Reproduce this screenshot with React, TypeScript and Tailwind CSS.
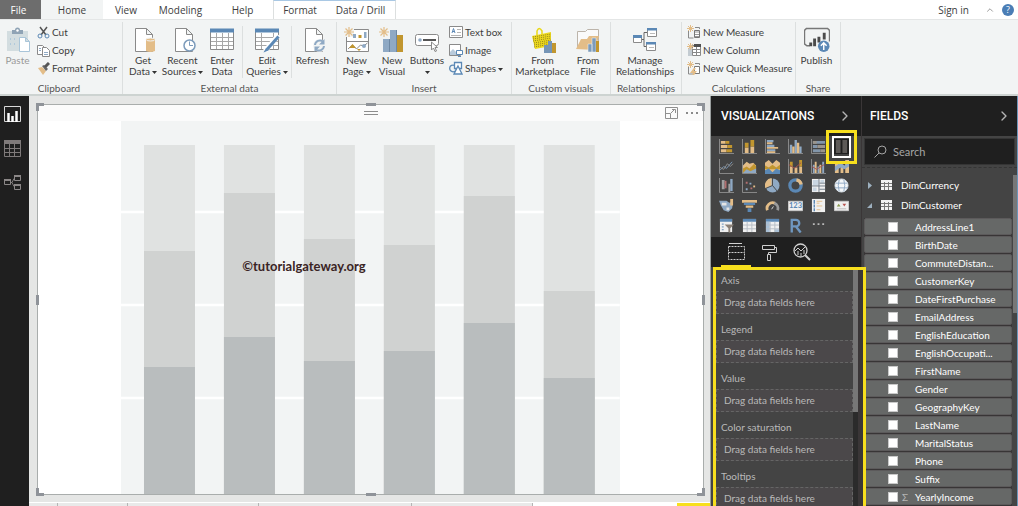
import { FC, ReactNode, useState } from "react";
import clsx from "clsx";
import { FiChevronRight, FiChevronUp } from "react-icons/fi";

const BLUE = "#5b88b5";
const STEEL = "#8fa9c4";
const GOLD = "#c1962f";
const TAN = "#e3bd88";
const GRAY = "#8a8a8a";

interface IconProps {
  size?: number;
  box?: number;
  children: ReactNode;
}

// Small icons are drawn on a 13 or 14 unit grid, ribbon icons on 26
const Icon: FC<IconProps> = ({ size = 16, box = size, children }) => (
  <svg
    width={size}
    height={size}
    viewBox={`0 0 ${box} ${box}`}
    fill="none"
    className="shrink-0"
    aria-hidden="true"
  >
    {children}
  </svg>
);

const Page: FC = () => (
  <path d="M5.5 1.5h11l6 6v17h-17zM16.5 1.5v6h6" fill="#fff" stroke={GRAY} />
);

const Spark: FC = () => (
  <path
    d="M5 0v10M0 5h10M1.5 1.5l7 7M8.5 1.5l-7 7"
    stroke={TAN}
    strokeWidth="1.2"
  />
);

// Ribbon icons
const PasteIcon = () => (
  <Icon size={26}>
    <path d="M2 4h21v20H2z" fill="#d3dde0" />
    <path d="M7 7V3h3a2.5 2.5 0 0 1 5 0h3v4z" fill="#8fa3b5" />
    <circle cx="12.5" cy="3.5" r="1.2" fill="#fff" />
    <path d="M14.5 10.5h6l4 4v10h-10zM20.5 10.5v4h4" fill="#fff" stroke="#a9c5d9" />
    <path d="M5 12h1M9 12h1M5 17h1M9 17h1" stroke="#8fb6d6" />
  </Icon>
);

const GetDataIcon = () => (
  <Icon size={26}>
    <Page />
    <path d="M16 13h9v11q-4.5 2-9 0z" fill={TAN} />
    <ellipse cx="20.5" cy="12.5" rx="4.5" ry="1.5" fill={TAN} stroke="#f2f4f4" />
  </Icon>
);

const RecentIcon = () => (
  <Icon size={26}>
    <Page />
    <circle cx="19.5" cy="18.5" r="5.5" fill="#fff" stroke="#7c9bbb" strokeWidth="1.5" />
    <path d="M19.5 14.5v4h3.5" stroke="#7c9bbb" />
  </Icon>
);

const TableIcon = () => (
  <Icon size={26}>
    <path d="M1.5 2.5h23v20h-23z" fill="#fff" stroke={GRAY} />
    <path d="M1 1.5h24v4H1z" fill={BLUE} />
    <path d="M2 10.5h22M2 14.5h22M2 18.5h22M7.5 6v16M13.5 6v16M19.5 6v16" stroke="#a8a8a8" />
  </Icon>
);

const EditQueriesIcon = () => (
  <Icon size={26}>
    <path d="M1.5 2.5h23v20h-23z" fill="#fff" stroke={GRAY} />
    <path d="M1 1.5h24v4H1z" fill={BLUE} />
    <path d="M2 10.5h22M2 14.5h22M2 18.5h22M7.5 6v16M19.5 6v16" stroke="#a8a8a8" />
    <path d="M24.5 8 11 24" stroke="#fff" strokeWidth="5" />
    <path d="M24.5 9.5 13 22.5" stroke={BLUE} strokeWidth="3" />
    <path d="m12 21 2.5 2.5-5 2z" fill={BLUE} />
  </Icon>
);

const RefreshIcon = () => (
  <Icon size={26}>
    <Page />
    <circle cx="19.5" cy="18.5" r="6.5" fill="#f2f4f4" />
    <path d="M15 18a5 5 0 0 1 8-3.5M24 19a5 5 0 0 1-8 3.5" stroke={STEEL} strokeWidth="2" />
    <path d="M24.5 12v5.5H19zM14.5 25v-5.5H20z" fill={STEEL} />
  </Icon>
);

const NewPageIcon = () => (
  <Icon size={26}>
    <path d="M2.5 2.5h22v22h-22zM2 14.5h22" fill="#fff" stroke={GRAY} />
    <path d="M2 2h8v8H2z" fill="#f2f4f4" />
    <path d="M9 7h3v4H9zM20 5h2.5v6H20z" fill={STEEL} />
    <path d="M14.5 8h3v3h-3z" fill={GOLD} />
    <path d="m4 22 4.5-4 4 4 4-4 3 1 4-3" stroke={GRAY} />
    <path d="m5 21 3.5-4 3.5 4zM13 22h4l-2 2z" fill={GOLD} />
    <circle cx="20" cy="19" r="2" fill={STEEL} />
    <Spark />
  </Icon>
);

const NewVisualIcon = () => (
  <Icon size={26}>
    <path d="M4 12h6v13H4zM11 3h6v22h-6z" fill={STEEL} />
    <path d="M18 8h6v17h-6z" fill={GOLD} />
    <path d="M10.5 12v13M17.5 3v22" stroke="#6e88a3" />
    <Spark />
  </Icon>
);

const ButtonsIcon = () => (
  <Icon size={26}>
    <rect x="1.5" y="7.5" width="23" height="11" rx="2" fill="#fff" stroke={GRAY} />
    <circle cx="6" cy="13" r="1.8" fill={STEEL} />
    <path d="M9 13h13" stroke="#555" strokeWidth="2" />
    <path d="M17.5 15v8l2-2 1.5 3.5 1.5-.5-1.5-3.5H23.500z" fill="#fff" stroke={GRAY} />
  </Icon>
);

const MarketplaceIcon = () => (
  <Icon size={26}>
    <path d="M7 9V4Q9-1 12 4v3" stroke="#e9d816" strokeWidth="1.5" />
    <path d="m2 9 19-4v14L5 22z" fill="#ecd91d" />
    <path
      d="m3 10 18-3M3 12l18-3M3 14l18-3M4 16l17-3M4 18l17-3M4 20l17-3"
      stroke="#94821f"
      strokeDasharray="1 1"
    />
    <path d="M14 18h4v8h-4zM18 14h4v12h-4z" fill="#7595b6" />
    <path d="M22 16h4v10h-4z" fill={GOLD} />
  </Icon>
);

const FileIcon = () => (
  <Icon size={26}>
    <path d="M2.5 22V4.5h8l2-2h11V14" fill="#fafafa" stroke="#bcb4aa" />
    <path d="m1 22 5-10h6l2-3h10l-4 14z" fill={TAN} />
    <path d="M13 17h4v8h-4zM17 11h4v14h-4z" fill="#7c9bbb" stroke="#f2f4f4" strokeWidth=".5" />
    <path d="M21 14h3v11h-3z" fill={GOLD} />
  </Icon>
);

const ManageIcon = () => (
  <Icon size={26}>
    <path d="M9 12.5h3v-7h4M12 12.5v7h3" stroke="#666" />
    <path d="M1.5 8.5h8v7h-8zM15.5 1.5h9v8h-9zM14.5 15.5h9v8h-9z" fill="#fff" stroke={GRAY} />
    <path d="M1 8h9v3H1zM15 1h10v2.5H15zM14 15h10v2.5H14z" fill={BLUE} />
    <path d="M18 6.5h5M17 20.5h5" stroke="#bbb" />
  </Icon>
);

const PublishIcon = () => (
  <Icon size={26} box={27}>
    <path d="M6 19.5H3l-2.5-2v-14l2-2h22l2 2V15" stroke="#777" strokeWidth="1.5" />
    <path d="M7 16v4M11 12v8M15.5 10v6M21 6v7" stroke="#4c4c4c" strokeWidth="3" />
    <circle cx="20.5" cy="20" r="6" fill={BLUE} />
    <path d="M20.5 24v-7M17.5 19.5l3-3 3 3" stroke="#fff" strokeWidth="1.5" />
  </Icon>
);

const CutIcon = () => (
  <Icon size={13}>
    <path d="m3 1 6 8M10 1 4 9" stroke="#555" strokeWidth="1.5" />
    <circle cx="3" cy="10" r="2" stroke={BLUE} />
    <circle cx="10" cy="10" r="2" stroke={BLUE} />
  </Icon>
);

const CopyIcon = () => (
  <Icon size={13}>
    <path d="M.5 1.5h5l2 2v7h-7z" fill="#fff" stroke={GRAY} />
    <path d="M5.5 3.5h4l3 3v6h-7z" fill="#fff" stroke={GRAY} />
    <path d="M2 4.5h2M2 6.5h2M7 8.5h4M7 10.5h4" stroke={STEEL} />
  </Icon>
);

const PainterIcon = () => (
  <Icon size={13}>
    <path d="m1 6 4-1 4 4-3 4z" fill={TAN} />
    <path d="m5 4 2-1 4 4-2 2z" fill="#666" />
    <path d="m8 5 4-4" stroke="#555" strokeWidth="3" />
  </Icon>
);

const TextBoxIcon = () => (
  <Icon size={14}>
    <path d="M.5 1.5h13v11H.5z" fill="#fff" stroke={GRAY} />
    <path d="m3 8 1.5-4.5L6 8M3.5 6.5h2" stroke={BLUE} />
    <path d="M8 4.5h4M8 7.5h4M2 10.5h10" stroke="#b5b5b5" />
  </Icon>
);

const ImageIcon = () => (
  <Icon size={14}>
    <path d="M.5 1.5h11v11H.5z" fill="#fff" stroke={GRAY} />
    <path d="M1 12V9l3-3 4 4v2z" fill="#b8cadb" />
    <path d="M7.5 7.5h6v4h-6zM9 13.5h3" fill="#fff" stroke={BLUE} />
  </Icon>
);

const ShapesIcon = () => (
  <Icon size={14}>
    <circle cx="4" cy="7.5" r="3.3" stroke={BLUE} strokeWidth="1.3" />
    <path d="M5.5 1.5h7v6h-7z" fill="#fff" stroke={BLUE} strokeWidth="1.3" />
    <path d="m9 5 4 8H5z" fill="#fff" stroke={BLUE} strokeWidth="1.3" />
  </Icon>
);

const SmallSpark = () => (
  <path d="M3.5 0v7M0 3.5h7M1 1l5 5M6 1 1 6" stroke={TAN} />
);

const MeasureIcon = () => (
  <Icon size={14}>
    <path d="M1.5 5v8h5M8 2.5h4.5V4" stroke={GRAY} />
    <path d="M7.5 5.5h5v7h-5z" fill="#fff" stroke="#777" />
    <path d="M8 7h4M8 9.5h4M8 11.5h4" stroke="#999" />
    <SmallSpark />
  </Icon>
);

const ColumnIcon = () => (
  <Icon size={14}>
    <path d="M1 5h4v8H1z" fill="#c3cbd1" />
    <path d="M5.5 2.5h8v10h-8zM9.5 3v10M6 6.5h7M6 9.5h7" fill="#fff" stroke="#888" />
    <path d="M7 1h7v3H7z" fill="#4f4f4f" />
    <SmallSpark />
  </Icon>
);

const QuickMeasureIcon = () => (
  <Icon size={14}>
    <path d="M1.5 5v8h5M8 2.5h4.5V4" stroke={GRAY} />
    <path d="M7.5 5.5h5v7h-5z" fill="#fff" stroke="#777" />
    <path d="M8 7 5 11h3l-2 3" stroke={TAN} strokeWidth="2" />
    <SmallSpark />
  </Icon>
);

// Ribbon building blocks
interface BigButtonProps {
  icon: ReactNode;
  lines: string[];
  menu?: boolean;
  className?: string;
}

const Caret: FC = () => (
  <svg width="5" height="3" viewBox="0 0 5 3" className="ml-0.5 inline-block align-middle" aria-hidden="true">
    <path d="M0 0h5L2.5 3z" fill="#333" />
  </svg>
);

const BigButton: FC<BigButtonProps> = ({ icon, lines, menu, className }) => (
  <button
    type="button"
    className={clsx("flex shrink-0 flex-col items-center whitespace-nowrap pt-[5px]", className)}
  >
    {icon}
    <span className="mt-0.5 text-center leading-[11px]">
      {lines.map((line, i) => (
        <span key={line || "menu"} className="block h-[11px]">
          {line}
          {menu && i === lines.length - 1 && <Caret />}
        </span>
      ))}
    </span>
  </button>
);

interface SmallButtonProps {
  icon: ReactNode;
  label: string;
  menu?: boolean;
}

const SmallButton: FC<SmallButtonProps> = ({ icon, label, menu }) => (
  <button type="button" className="flex h-[18px] items-center gap-0.5 whitespace-nowrap">
    {icon}
    <span>
      {label}
      {menu && <Caret />}
    </span>
  </button>
);

interface GroupProps {
  title: string;
  className: string;
  children: ReactNode;
}

const Group: FC<GroupProps> = ({ title, className, children }) => (
  <section
    aria-label={title}
    className={clsx("mt-0.5 flex shrink-0 flex-col border-r border-[#dcdfdf]", className)}
  >
    <div className="flex flex-1">{children}</div>
    <div className="h-3 whitespace-nowrap text-center text-[#555]">{title}</div>
  </section>
);

const ribbonTabs = [
  { name: "File", className: "w-[41px] bg-[#6d6d6d] pr-1 text-white" },
  { name: "Home", className: "w-[62px] bg-[#f2f4f4]" },
  { name: "View", className: "w-[46px]" },
  { name: "Modeling", className: "w-[63px]" },
  { name: "Help", className: "w-[61px]" },
  { name: "Format", className: "w-[53px] border-l border-t border-l-[#dcdfdf] border-t-[#a9c8e4]" },
  { name: "Data / Drill", className: "w-[70px] border-r border-t border-r-[#dcdfdf] border-t-[#a9c8e4]" },
];

const Ribbon: FC = () => (
  <header className="shrink-0">
    <div className="flex h-[19px] items-stretch bg-white font-['Open_Sans','Noto_Sans',sans-serif]">
      <nav className="flex" aria-label="Ribbon">
        {ribbonTabs.map((tab) => (
          <button
            key={tab.name}
            type="button"
            className={clsx("shrink-0 whitespace-nowrap text-center", tab.className)}
          >
            {tab.name}
          </button>
        ))}
      </nav>
      <div className="ml-auto flex items-center pr-1">
        <button type="button">Sign in</button>
        <button type="button" aria-label="Collapse ribbon" className="ml-4 text-[#888]">
          <FiChevronUp size={10} />
        </button>
        <button
          type="button"
          aria-label="Help center"
          className="ml-[7px] size-3 rounded-full bg-[#4a7db5] text-[9px] leading-3 text-white"
        >
          ?
        </button>
      </div>
    </div>
    <div className="flex h-[77px] border-b-2 border-t border-b-[#cdd3d1] border-t-[#e4e6e6] bg-[#f2f4f4]">
      <Group title="Clipboard" className="w-[123px] pr-1">
        <BigButton icon={<PasteIcon />} lines={["Paste"]} className="w-[35px] text-[#999]" />
        <div className="ml-0.5 flex flex-col pt-px">
          <SmallButton icon={<CutIcon />} label="Cut" />
          <SmallButton icon={<CopyIcon />} label="Copy" />
          <SmallButton icon={<PainterIcon />} label="Format Painter" />
        </div>
      </Group>
      <Group title="External data" className="w-[214px]">
        <BigButton icon={<GetDataIcon />} lines={["Get", "Data"]} menu className="w-[40px]" />
        <BigButton icon={<RecentIcon />} lines={["Recent", "Sources"]} menu className="w-[39px]" />
        <BigButton icon={<TableIcon />} lines={["Enter", "Data"]} className="w-[40px]" />
        <div className="my-1 w-px bg-[#dcdfdf]" />
        <BigButton icon={<EditQueriesIcon />} lines={["Edit", "Queries"]} menu className="w-[48px]" />
        <div className="my-1 w-px bg-[#dcdfdf]" />
        <BigButton icon={<RefreshIcon />} lines={["Refresh"]} className="w-[41px]" />
      </Group>
      <Group title="Insert" className="w-[175px]">
        <BigButton icon={<NewPageIcon />} lines={["New", "Page"]} menu className="w-[39px]" />
        <BigButton icon={<NewVisualIcon />} lines={["New", "Visual"]} className="w-[32px]" />
        <BigButton icon={<ButtonsIcon />} lines={["Buttons", ""]} menu className="w-[38px]" />
        <div className="ml-[3px] flex flex-col pt-px">
          <SmallButton icon={<TextBoxIcon />} label="Text box" />
          <SmallButton icon={<ImageIcon />} label="Image" />
          <SmallButton icon={<ShapesIcon />} label="Shapes" menu />
        </div>
      </Group>
      <Group title="Custom visuals" className="w-[99px]">
        <BigButton icon={<MarketplaceIcon />} lines={["From", "Marketplace"]} className="w-[61px]" />
        <BigButton icon={<FileIcon />} lines={["From", "File"]} className="w-[30px]" />
      </Group>
      <Group title="Relationships" className="w-[71px]">
        <BigButton icon={<ManageIcon />} lines={["Manage", "Relationships"]} className="w-[68px]" />
      </Group>
      <Group title="Calculations" className="w-[114px]">
        <div className="ml-[5px] flex flex-col pt-px">
          <SmallButton icon={<MeasureIcon />} label="New Measure" />
          <SmallButton icon={<ColumnIcon />} label="New Column" />
          <SmallButton icon={<QuickMeasureIcon />} label="New Quick Measure" />
        </div>
      </Group>
      <Group title="Share" className="w-[45px]">
        <BigButton icon={<PublishIcon />} lines={["Publish"]} className="w-[41px]" />
      </Group>
    </div>
  </header>
);

// Left rail
const Rail: FC = () => (
  <nav aria-label="Views" className="flex w-[29px] shrink-0 flex-col items-center gap-[17px] bg-[#1f1f1f] pr-1 pt-[10px]">
    <button type="button" aria-label="Report">
      <svg width="17" height="17" viewBox="0 0 17 17" fill="none" className="block">
        <path d="M.5.5h16v15H.5z" stroke="#d8d8d8" />
        <path d="M4.5 7v9M8.5 10v6M12.5 5v11" stroke="#fff" strokeWidth="2.5" />
      </svg>
    </button>
    <button type="button" aria-label="Data">
      <svg width="17" height="17" viewBox="0 0 17 17" fill="none" className="block">
        <path d="M.5.5h16v16H.5zM1 8.5h15M1 12.5h15M5.5 4v12M10.5 4v12" stroke="#7f7a7a" />
        <path d="M0 0h17v4H0z" fill="#7f7a7a" />
      </svg>
    </button>
    <button type="button" aria-label="Model">
      <svg width="17" height="17" viewBox="0 0 17 17" fill="none" className="block">
        <path d="M6 8.5h2l2-4M8 8.5l2 4" stroke="#7f7a7a" />
        <path d="M.5 5.5h6v5h-6zM10.5 1.5h6v5h-6zM10.5 10.5h6v5h-6z" stroke="#8b8787" />
        <path d="M0 5h7v2H0zM10 1h7v2h-7zM10 10h7v2h-7z" fill="#8b8787" />
      </svg>
    </button>
  </nav>
);

// Stacked columns: where the middle and the bottom segments start
const columns = [
  { x: 23, middle: 130, bottom: 246 },
  { x: 103, middle: 72, bottom: 216 },
  { x: 183, middle: 118, bottom: 240 },
  { x: 263, middle: 124, bottom: 230 },
  { x: 343, middle: 75, bottom: 202 },
  { x: 423, middle: 170, bottom: 257 },
];

const PlaceholderChart: FC = () => (
  <svg
    viewBox="0 0 499 373"
    preserveAspectRatio="none"
    className="h-full w-3/4 bg-[#f2f4f4]"
    role="img"
    aria-label="Stacked column chart"
  >
    <path d="M0 91h499M0 184h499M0 277h499" stroke="#fff" strokeWidth="2.5" />
    {columns.map(({ x, middle, bottom }) => (
      <g key={x}>
        <rect x={x} y={24} width={51} height={349} fill="#e0e2e1" />
        <rect x={x} y={middle} width={51} height={373 - middle} fill="#d0d2d1" />
        <rect x={x} y={bottom} width={51} height={373 - bottom} fill="#b9bdbe" />
      </g>
    ))}
  </svg>
);

const handles = [
  "-left-0.5 -top-0.5 size-2 border-l-[3px] border-t-[3px]",
  "-right-0.5 -top-0.5 size-2 border-r-[3px] border-t-[3px]",
  "-bottom-0.5 -left-0.5 size-2 border-b-[3px] border-l-[3px]",
  "-bottom-0.5 -right-0.5 size-2 border-b-[3px] border-r-[3px]",
  "-top-0.5 left-1/2 w-[10px] -translate-x-1/2 border-t-[3px]",
  "-bottom-0.5 left-1/2 w-[10px] -translate-x-1/2 border-b-[3px]",
  "-left-0.5 top-1/2 h-[10px] -translate-y-1/2 border-l-[3px]",
  "-right-0.5 top-1/2 h-[10px] -translate-y-1/2 border-r-[3px]",
];

const Canvas: FC = () => (
  <main className="flex min-w-0 flex-1 flex-col border-r border-[#9a9f9f] bg-[#e5e6e5]">
    <div className="relative mb-[7px] ml-2 mr-1.5 mt-2 flex min-h-0 flex-1 flex-col border border-[#a9adac] bg-white">
      <div className="flex h-4 shrink-0 items-center bg-[#fbfbfb] px-1">
        <span className="flex-1" />
        <span className="h-1 w-[14px] border-y border-[#8d8d8d]" />
        <span className="flex flex-1 items-center justify-end gap-2">
          <button type="button" aria-label="Focus mode">
            <svg width="13" height="12" viewBox="0 0 13 12" fill="none" className="block">
              <path d="M.5.5h12v11H.5zM.5 6.5h5v5M6 6l4-4M7 2.5h3.5V6" stroke="#8f8f8f" />
            </svg>
          </button>
          <button type="button" aria-label="More options">
            <svg width="13" height="3" viewBox="0 0 13 3" fill="#8a8a8a" className="block">
              <path d="M0 0h2v2H0zM5 0h2v2H5zM10 0h2v2h-2z" />
            </svg>
          </button>
        </span>
      </div>
      <div className="flex min-h-0 flex-1 justify-center">
        <PlaceholderChart />
      </div>
      <span className="absolute left-[40%] top-[161px] -translate-x-1/2 -translate-y-1/2 whitespace-nowrap text-[13px] font-bold text-[#3a2424]">
        ©tutorialgateway.org
      </span>
      {handles.map((handle) => (
        <span key={handle} className={clsx("absolute border-[#8f9399]", handle)} />
      ))}
    </div>
    <div className="flex h-1 shrink-0 border-t border-white bg-white">
      <span className="w-[29px] border-r border-[#b5b5b5] bg-[#e9e9e9]" />
      <span className="w-[70px] border-r border-[#b5b5b5] bg-[#e9e9e9]" />
      <span className="w-[131px] border-r border-[#b5b5b5] bg-[#e9e9e9]" />
      <span className="w-[153px] border-r border-[#b5b5b5] bg-[#e9e9e9]" />
      <span className="w-[121px] border-r border-[#b5b5b5] bg-[#e9e9e9]" />
      <span className="ml-auto w-[33px] bg-[#f7df1e]" />
    </div>
  </main>
);

// Visual gallery
const axes = <path d="M.5 0v15.5H16" stroke="#8f8f8f" />;
const sheet = <path d="M1 1h14v14H1z" fill="#f0f0f0" />;

const visuals: { name: string; art: ReactNode }[] = [
  {
    name: "Stacked bar chart",
    art: (
      <>
        {axes}
        <path d="M2 2h5v3H2zM2 6.5h7v3H2zM2 11h6v3H2z" fill={TAN} />
        <path d="M7 2h4v3H7zM9 6.5h5v3H9zM8 11h6v3H8z" fill={GOLD} />
      </>
    ),
  },
  {
    name: "Stacked column chart",
    art: (
      <>
        {axes}
        <path d="M3 9h4v6H3zM9 8h4v7H9z" fill={TAN} />
        <path d="M3 4h4v5H3zM9 1h4v7H9z" fill={GOLD} />
      </>
    ),
  },
  {
    name: "Clustered bar chart",
    art: (
      <>
        {axes}
        <path d="M2 1h7v2.500H2zM2 6h8v2.500H2zM2 11h9v2H2z" fill={STEEL} />
        <path d="M2 3.500h6v2H2zM2 8.500h12v2H2zM2 13h9v2H2z" fill={TAN} />
      </>
    ),
  },
  {
    name: "Clustered column chart",
    art: (
      <>
        {axes}
        <path d="M2 6h2.500v9H2zM7 1h2.500v14H7zM12 8h2.500v7H12z" fill={STEEL} />
        <path d="M4.500 8H7v7H4.500zM9.500 4H12v11H9.500z" fill={TAN} />
      </>
    ),
  },
  {
    name: "100% stacked bar chart",
    art: (
      <>
        {axes}
        <path d="M2 2h13v3H2zM2 6.5h5v3H2zM2 11h8v3H2z" fill="#8296ab" />
        <path d="M2 2h4v3H2zM7 6.5h8v3H7zM10 11h5v3h-5z" fill="#9b958c" />
      </>
    ),
  },
  {
    name: "100% stacked column chart",
    art: (
      <>
        <path d="M0 0h16v16H0z" fill="#1f1f1f" />
        <path d="M2 1h5v14H2zM9 1h5v14H9z" fill="#5d5a58" />
      </>
    ),
  },
  {
    name: "Line chart",
    art: (
      <>
        {axes}
        <path d="m1 12 4-4 3 2 6-7" stroke="#7d99b7" />
        <path d="m1 9 4 2 4-6 3 3 3-3" stroke="#8f8f8f" />
      </>
    ),
  },
  {
    name: "Area chart",
    art: (
      <>
        {axes}
        <path d="m1 7 4-4 3 2 4-1 3 3v8H1z" fill={TAN} />
        <path d="m1 10 4-2 3 2 5-5 2 3v7H1z" fill={GOLD} />
        <path d="m1 15 4-4 4 2 6-3v5z" fill={STEEL} />
      </>
    ),
  },
  {
    name: "Stacked area chart",
    art: (
      <>
        <path d="m0 4 4-3 4 4 4-4 4 3v12H0z" fill={TAN} />
        <path d="m0 7 4 2 4-3 4 3 4-3v5H0z" fill={GOLD} />
        <path d="m0 12 4-2 4 4 4-4 4 2v4H0z" fill={BLUE} />
      </>
    ),
  },
  {
    name: "Line and stacked column chart",
    art: (
      <>
        {axes}
        <path d="M2 8h3v7H2zM7 9h3v6H7zM12 8h3v7h-3z" fill={TAN} />
        <path d="M2 3h3v5H2zM12 1h3v7h-3z" fill={GOLD} />
        <path d="m1 6 6 4 7-6" stroke="#a75252" />
      </>
    ),
  },
  {
    name: "Line and clustered column chart",
    art: (
      <>
        {axes}
        <path d="M2 6h2v9H2zM7 8h2v7H7zM12 3h2v12h-2z" fill={STEEL} />
        <path d="M4 3h2v12H4zM9 6h2v9H9z" fill={TAN} />
        <path d="m1 8 5 3 8-5" stroke="#a75252" />
      </>
    ),
  },
  {
    name: "Ribbon chart",
    art: (
      <>
        <path d="M1 2h4v13H1zM7 6h3v9H7zM12 1h4v14h-4z" fill={TAN} />
        <path d="m1 8 6-4 4 3 5-3v4l-5 3-4-2-6 4z" fill={STEEL} />
      </>
    ),
  },
  {
    name: "Waterfall chart",
    art: (
      <>
        {axes}
        <path d="M3 2h3v10H3zM10 6h2v9h-2z" fill="#a0a0a0" />
        <path d="M6 3h2v8H6z" fill="#b26f6f" />
        <path d="M12 1h2.5v13H12z" fill={STEEL} />
      </>
    ),
  },
  {
    name: "Scatter chart",
    art: (
      <>
        {axes}
        <path d="M4 4h2v2H4zM9 10h2v2H9z" fill="#b26f6f" />
        <path d="M8 5h2v2H8zM4 11h2v2H4z" fill={STEEL} />
        <path d="M12 8h2v2h-2z" fill={TAN} />
      </>
    ),
  },
  {
    name: "Pie chart",
    art: (
      <>
        <circle cx="8" cy="8" r="7.5" fill={STEEL} />
        <path d="M7 8V0a8 8 0 0 0-6.5 11z" fill={TAN} />
        <path d="m8 8 5 6M8 8V0M8 8l-7 3" stroke="#444" />
      </>
    ),
  },
  {
    name: "Donut chart",
    art: (
      <>
        <circle cx="8" cy="8" r="6" stroke={BLUE} strokeWidth="3.5" />
        <path d="M9 2a6 6 0 0 1 5 5" stroke={TAN} strokeWidth="3.5" />
      </>
    ),
  },
  {
    name: "Treemap",
    art: (
      <>
        {sheet}
        <path d="M2 2h6v6H2zM10 2h4v3h-4zM2 10h4v4H2z" fill="#c9d6e2" />
        <path d="M1 8.5h14M8.5 1v14M9 5.5h6M9 12h6" stroke="#6e7a86" />
      </>
    ),
  },
  {
    name: "Map",
    art: (
      <>
        <circle cx="8" cy="8" r="7" fill="#f4f7f9" stroke="#d4dde4" />
        <path d="M2 5.5h12M1 10.5h14M5.5 2q-2 6 0 12M10.5 2q2 6 0 12" stroke={STEEL} />
      </>
    ),
  },
  {
    name: "Filled map",
    art: (
      <>
        <path d="M0 3h8l3 2 4-1-1 7-4 4-5-2-3-5z" fill={STEEL} />
        <path d="M3 5h5v3H3zM8 10h3v3H8z" fill="#e4e4e4" />
        <path d="M12 1h3v7h-3z" fill={TAN} />
      </>
    ),
  },
  {
    name: "Funnel",
    art: (
      <>
        <path d="M0 2h16v3H0zM4 8h8v2.5H4z" fill={TAN} />
        <path d="M2 5h12v2.5H2zM6 11h4v4H6z" fill={BLUE} />
      </>
    ),
  },
  {
    name: "Gauge",
    art: (
      <>
        <path d="M2.5 13a6 6 0 0 1 8-7.5" stroke={TAN} strokeWidth="3" />
        <path d="M10 5.5A6 6 0 0 1 13.5 13" stroke="#9a9a9a" strokeWidth="3" />
        <path d="m7 12 2-3" stroke="#ddd" />
      </>
    ),
  },
  {
    name: "Card",
    art: (
      <>
        <path d="M.5 3.5h15v10H.5z" fill="#f0f0f0" stroke="#ccc" />
        <text x="8" y="11" textAnchor="middle" fontSize="8" fontWeight="bold" fill={BLUE}>
          123
        </text>
      </>
    ),
  },
  {
    name: "Multi-row card",
    art: (
      <>
        {sheet}
        <path d="M3.5 2v4M3.5 7v3M3.5 11v3" stroke={BLUE} strokeWidth="1.5" />
        <path d="M6 3.5h6M6 5.5h3M6 8.5h6M6 12.5h4" stroke={TAN} />
      </>
    ),
  },
  {
    name: "KPI",
    art: (
      <>
        <path d="M.5 3.5h15v10H.5z" fill="#f0f0f0" stroke="#ccc" />
        <path d="m3 9 2-3 2 3z" fill="#8a9b4f" />
        <path d="M9 6h4l-2 3z" fill="#b85450" />
        <path d="M3 11.5h10" stroke="#bbb" />
      </>
    ),
  },
  {
    name: "Slicer",
    art: (
      <>
        <path d="M1 1h13v14H1z" fill="#f0f0f0" />
        <path d="M1 1h13v3H1z" fill={BLUE} />
        <path d="M3 6.5h2M3 9.5h2M3 12.5h2" stroke={BLUE} />
        <path d="M6 7h10l-4 4v5l-2-1v-4z" fill="#8b8178" />
      </>
    ),
  },
  {
    name: "Table",
    art: (
      <>
        {sheet}
        <path d="M1 1h14v3H1z" fill={BLUE} />
        <path d="M1 7.5h14M1 11.5h14M5.5 4v11M10.5 4v11" stroke="#b5bdc4" />
      </>
    ),
  },
  {
    name: "Matrix",
    art: (
      <>
        {sheet}
        <path d="M1 1h14v3H1z" fill={BLUE} />
        <path d="M1 4h4v11H1zM10 12h5v3h-5z" fill="#a9c0d6" />
        <path d="M1 7.5h14M1 11.5h14M5.5 4v11M10.5 4v11" stroke="#b5bdc4" />
      </>
    ),
  },
  {
    name: "R script visual",
    art: <path d="M4 15.5V2h4.5a3.5 3.5 0 0 1 0 7H4M8.5 9l5 6.5" stroke="#6f97c0" strokeWidth="2.5" />,
  },
  {
    name: "Import a custom visual",
    art: <path d="M2 5.5h2v2H2zM7 5.5h2v2H7zM12 5.5h2v2h-2z" fill="#b9b9b9" />,
  },
];

const buckets = ["Axis", "Legend", "Value", "Color saturation", "Tooltips"];

interface PanelTitleProps {
  title: string;
  className: string;
}

const PanelTitle: FC<PanelTitleProps> = ({ title, className }) => (
  <div
    className={clsx(
      "flex h-10 shrink-0 items-center justify-between bg-[#1f1f1f] font-['Roboto',sans-serif] text-[12px] font-medium text-white",
      className
    )}
  >
    <h2>{title}</h2>
    <button type="button" aria-label={`Collapse ${title.toLowerCase()}`} className="text-[#b5b5b5]">
      <FiChevronRight size={16} />
    </button>
  </div>
);

const VisualizationsPanel: FC = () => {
  const [selected, setSelected] = useState("100% stacked column chart");

  return (
    <aside className="flex w-[150px] shrink-0 flex-col bg-[#444] text-[#b9b9b9]">
      <PanelTitle title="VISUALIZATIONS" className="pl-[10px] pr-2" />
      <div className="mt-px grid h-[98px] shrink-0 grid-cols-6 grid-rows-5 pl-1 pr-2">
        {visuals.map((visual) => (
          <button
            key={visual.name}
            type="button"
            aria-label={visual.name}
            aria-pressed={selected === visual.name}
            onClick={() => setSelected(visual.name)}
            className="relative flex items-center justify-center"
          >
            <svg width="15" height="15" viewBox="0 0 16 16" fill="none" aria-hidden="true">
              {visual.art}
            </svg>
            {selected === visual.name && (
              <span className="absolute -inset-x-1 -inset-y-[7px] z-10 border-[3px] border-[#f7df1e] p-[3px]">
                <span className="block h-full border-2 border-white" />
              </span>
            )}
          </button>
        ))}
      </div>
      <div className="mt-0.5 flex h-[30px] shrink-0 items-stretch bg-[#1f1f1f] pl-[10px]">
        <button type="button" aria-label="Fields" className="flex w-[30px] items-center justify-center border-b-2 border-[#f7df1e]">
          <svg width="17" height="17" viewBox="0 0 17 17" fill="none" stroke="#d0d0d0">
            <path d="M1 .5h13" />
            <path d="M.5 3.5h16v6H.5zM.5 9.5v7h16v-7" strokeDasharray="2 1" />
          </svg>
        </button>
        <button type="button" aria-label="Format" className="flex w-9 items-center justify-center">
          <svg width="17" height="17" viewBox="0 0 17 17" fill="none" stroke="#d0d0d0">
            <path d="M1.5 1.5h12v4h-12zM13.5 3.5h2v5h-8v2M6.5 10.5h3v6h-3z" />
          </svg>
        </button>
        <button type="button" aria-label="Analytics" className="flex w-[30px] items-center justify-center">
          <svg width="18" height="18" viewBox="0 0 18 18" fill="none" stroke="#d0d0d0">
            <circle cx="7.5" cy="7.5" r="6.5" strokeWidth="1.3" />
            <path d="m2 8 3-3 3 3 4-4M5 8v4M8 10v3M11 7v4" />
            <path d="m12 12 5 5" strokeWidth="2" />
          </svg>
        </button>
      </div>
      <div className="relative z-10 -mr-[5px] ml-0.5 flex min-h-0 flex-1 overflow-hidden border-x-[3px] border-t-[3px] border-[#f7df1e] bg-[#444]">
        <div className="min-w-0 flex-1 pt-0.5">
          {buckets.map((bucket) => (
            <div key={bucket} className="h-[49px]">
              <div className="h-[19px] pl-[5px] leading-4">{bucket}</div>
              <div className="h-[23px] whitespace-nowrap border border-dashed border-[#656565] bg-[#4b484a] pl-[7px] leading-5">
                Drag data fields here
              </div>
            </div>
          ))}
        </div>
        <div className="w-[5px] bg-[#2b2b2b]">
          <div className="h-[142px] bg-[#777]" />
        </div>
        <div className="w-[5px] bg-[#3a3637]" />
      </div>
    </aside>
  );
};

// Fields list
const fields = [
  "AddressLine1",
  "BirthDate",
  "CommuteDistan...",
  "CustomerKey",
  "DateFirstPurchase",
  "EmailAddress",
  "EnglishEducation",
  "EnglishOccupati...",
  "FirstName",
  "Gender",
  "GeographyKey",
  "LastName",
  "MaritalStatus",
  "Phone",
  "Suffix",
  "YearlyIncome",
];

const FieldTable: FC<{ name: string; open?: boolean }> = ({ name, open }) => (
  <button type="button" aria-expanded={!!open} className="flex h-5 w-full items-center pl-[5px]">
    <svg width="7" height="7" viewBox="0 0 7 7" fill="#9db0bf" aria-hidden="true">
      {open ? <path d="M5 1v5H0z" /> : <path d="m1 0 4 3.5L1 7z" />}
    </svg>
    <svg width="11" height="10" viewBox="0 0 11 10" fill="none" className="ml-[7px]" aria-hidden="true">
      <path d="M0 0h11v10H0z" fill="#f2f2f2" />
      <path d="M0 3.5h11M0 6.5h11M3.5 2v8M7.5 2v8" stroke="#777" />
    </svg>
    <span className="ml-[9px]">{name}</span>
  </button>
);

const FieldsPanel: FC = () => (
  <aside className="flex w-[157px] shrink-0 flex-col border-l border-r border-l-[#3a3637] border-r-[#6b95b8] bg-[#444] text-white">
    <PanelTitle title="FIELDS" className="pl-2 pr-[5px]" />
    <label className="mx-0.5 mt-0.5 flex h-[27px] shrink-0 items-center gap-[6px] border border-[#353535] bg-[#1f1f1f] pl-[9px]">
      <svg width="13" height="13" viewBox="0 0 13 13" fill="none" stroke="#a5a5a5" aria-hidden="true">
        <circle cx="8" cy="5" r="4" />
        <path d="m5 8-4.5 4.5" />
      </svg>
      <input
        type="text"
        aria-label="Search fields"
        placeholder="Search"
        className="w-0 min-w-0 flex-1 bg-transparent text-[11px] outline-none placeholder:text-[#a5a5a5]"
      />
    </label>
    <div className="mt-0.5 flex min-h-0 flex-1 overflow-hidden border-t border-dashed border-[#353535]">
      <div className="min-w-0 flex-1 pt-[7px]">
        <FieldTable name="DimCurrency" />
        <FieldTable name="DimCustomer" open />
        <ul className="ml-0.5 mt-[3px] bg-[#383536]">
          {fields.map((field) => (
            <li key={field} className="h-[18px] pb-px">
              <label className="flex h-[17px] items-center rounded-[2px] border border-[#5c5a5b] bg-[#666867] pl-[23px]">
                <input
                  type="checkbox"
                  className="size-[10px] shrink-0 appearance-none border border-[#c9c9c9] bg-white checked:bg-[#f7df1e]"
                />
                <span aria-hidden="true" className="w-[17px] shrink-0 pl-1 text-[#b5b5b5]">
                  {field === "YearlyIncome" && "Σ"}
                </span>
                <span className="whitespace-nowrap">{field}</span>
              </label>
            </li>
          ))}
        </ul>
      </div>
      <div className="ml-px w-1 pt-[7px]">
        <div className="h-[138px] bg-[#777]" />
      </div>
    </div>
  </aside>
);

const App: FC = () => (
  <div className="flex h-screen flex-col overflow-hidden bg-white font-['Lato','Noto_Sans',sans-serif] text-[10px] leading-3 text-[#3d3d3d]">
    <Ribbon />
    <div className="flex min-h-0 flex-1">
      <Rail />
      <Canvas />
      <VisualizationsPanel />
      <FieldsPanel />
    </div>
  </div>
);

export default App;
